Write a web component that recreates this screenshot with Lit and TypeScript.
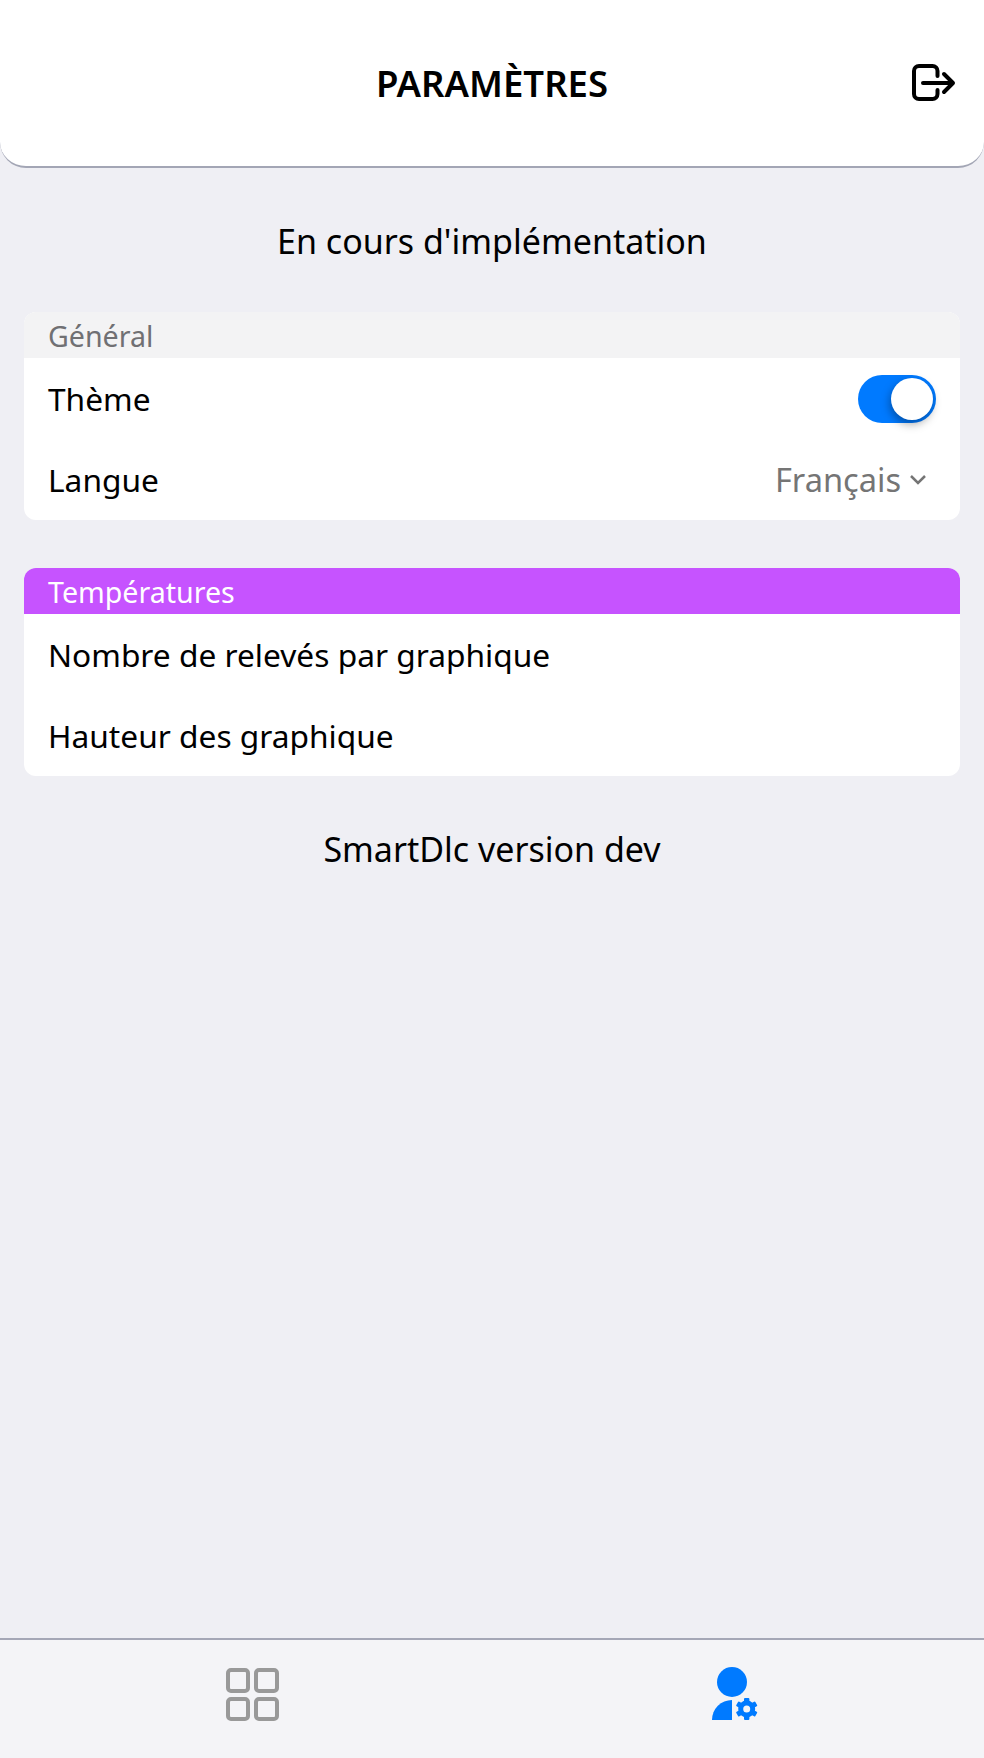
import { LitElement, html, css, svg } from "lit";
import { customElement } from "lit/decorators.js";

const TEETH = [0, 60, 120, 180, 240, 300];

@customElement("app-root")
export class AppRoot extends LitElement {
  static styles = css`
    :host { display: block; }
    .page { height: 1758px; display: flex; flex-direction: column; background: #efeff4; font-family: "Noto Sans", sans-serif; color: #000; }
    .header { box-sizing: border-box; height: 168px; background: #fff; border-bottom: 2px solid #a3a6b5; border-radius: 0 0 26px 26px; display: flex; align-items: center; justify-content: center; position: relative; flex: none; }
    .title { font-size: 36.5px; font-weight: 600; }
    .logout { position: absolute; right: 26px; top: 60px; width: 50px; height: 46px; }
    .content { flex: 1; display: flex; flex-direction: column; }
    .msg { font-size: 34px; text-align: center; line-height: 46px; }
    .msg.top { margin-top: 50px; }
    .card { margin: 0 24px; background: #fff; border-radius: 12px; overflow: hidden; }
    .card.first { margin-top: 48px; }
    .card.second { margin-top: 48px; }
    .card-head { height: 46px; line-height: 47px; padding: 0 24px; font-size: 28.6px; background: #f3f3f4; color: #707073; }
    .card-head.purple { background: #c653ff; color: #fff; }
    .row { height: 81px; line-height: 83px; display: flex; align-items: center; justify-content: space-between; padding: 0 24px; font-size: 31.7px; }
    .toggle { width: 78px; height: 48px; border-radius: 24px; background: #007aff; position: relative; }
    .knob { position: absolute; right: 3px; top: 3px; width: 42px; height: 42px; border-radius: 50%; background: #fff; box-shadow: -1px 4px 10px rgba(0,0,0,.35); }
    .select { color: #757575; display: flex; align-items: center; gap: 9px; font-size: 32.6px; padding-right: 10px; }
    .version { margin-top: 50px; }
    .tabs { box-sizing: border-box; height: 120px; padding-bottom: 8px; flex: none; background: #f4f4f7; border-top: 2px solid #a5a7b6; display: grid; grid-template-columns: 1fr 1fr; align-items: center; justify-items: center; }
    .grid-icon { margin-left: 12px; }
  `;
  render() {
    return html`<div class="page">
      <div class="header"><div class="title">PARAMÈTRES</div>
        <svg class="logout" viewBox="0 0 50 46" fill="none" stroke="#000" stroke-width="4" stroke-linecap="round" stroke-linejoin="round"><path d="M29.500 16V11a5 5 0 0 0-5-5H11a5 5 0 0 0-5 5V34a5 5 0 0 0 5 5H24.500a5 5 0 0 0 5-5V30"/><path d="M15 23H44.500M36 14l9 9-9 9"/></svg>
      </div>
      <div class="content">
        <div class="msg top">En cours d'implémentation</div>
        <div class="card first"><div class="card-head">Général</div>
          <div class="row">Thème<div class="toggle"><div class="knob"></div></div></div>
          <div class="row">Langue<div class="select">Français<svg width="16" height="10" viewBox="0 0 16 10" fill="none" stroke="#757575" stroke-width="2.500"><path d="M1 1l7 7 7-7"/></svg></div></div>
        </div>
        <div class="card second"><div class="card-head purple">Températures</div>
          <div class="row">Nombre de relevés par graphique</div>
          <div class="row">Hauteur des graphique</div>
        </div>
        <div class="msg version">SmartDlc version dev</div>
      </div>
      <div class="tabs">
        <svg class="grid-icon" width="54" height="54" viewBox="0 0 54 54" fill="none" stroke="#999" stroke-width="4"><rect x="3" y="2" width="20" height="21" rx="3"/><rect x="31" y="2" width="21" height="21" rx="3"/><rect x="3" y="31" width="20" height="20" rx="3"/><rect x="31" y="31" width="21" height="20" rx="3"/></svg>
        <svg width="60" height="56" viewBox="0 0 60 56" fill="#007aff"><circle cx="24" cy="15" r="15"/><path d="M4 53a20 20 0 0 1 20-20V53z"/><circle cx="38.700" cy="42" r="6" fill="none" stroke="#007aff" stroke-width="5"/>${TEETH.map((a) => svg`<rect x="36" y="31" width="5.400" height="5" rx="1" transform="rotate(${a} 38.700 42)"/>`)}</svg>
      </div>
    </div>`;
  }
}
